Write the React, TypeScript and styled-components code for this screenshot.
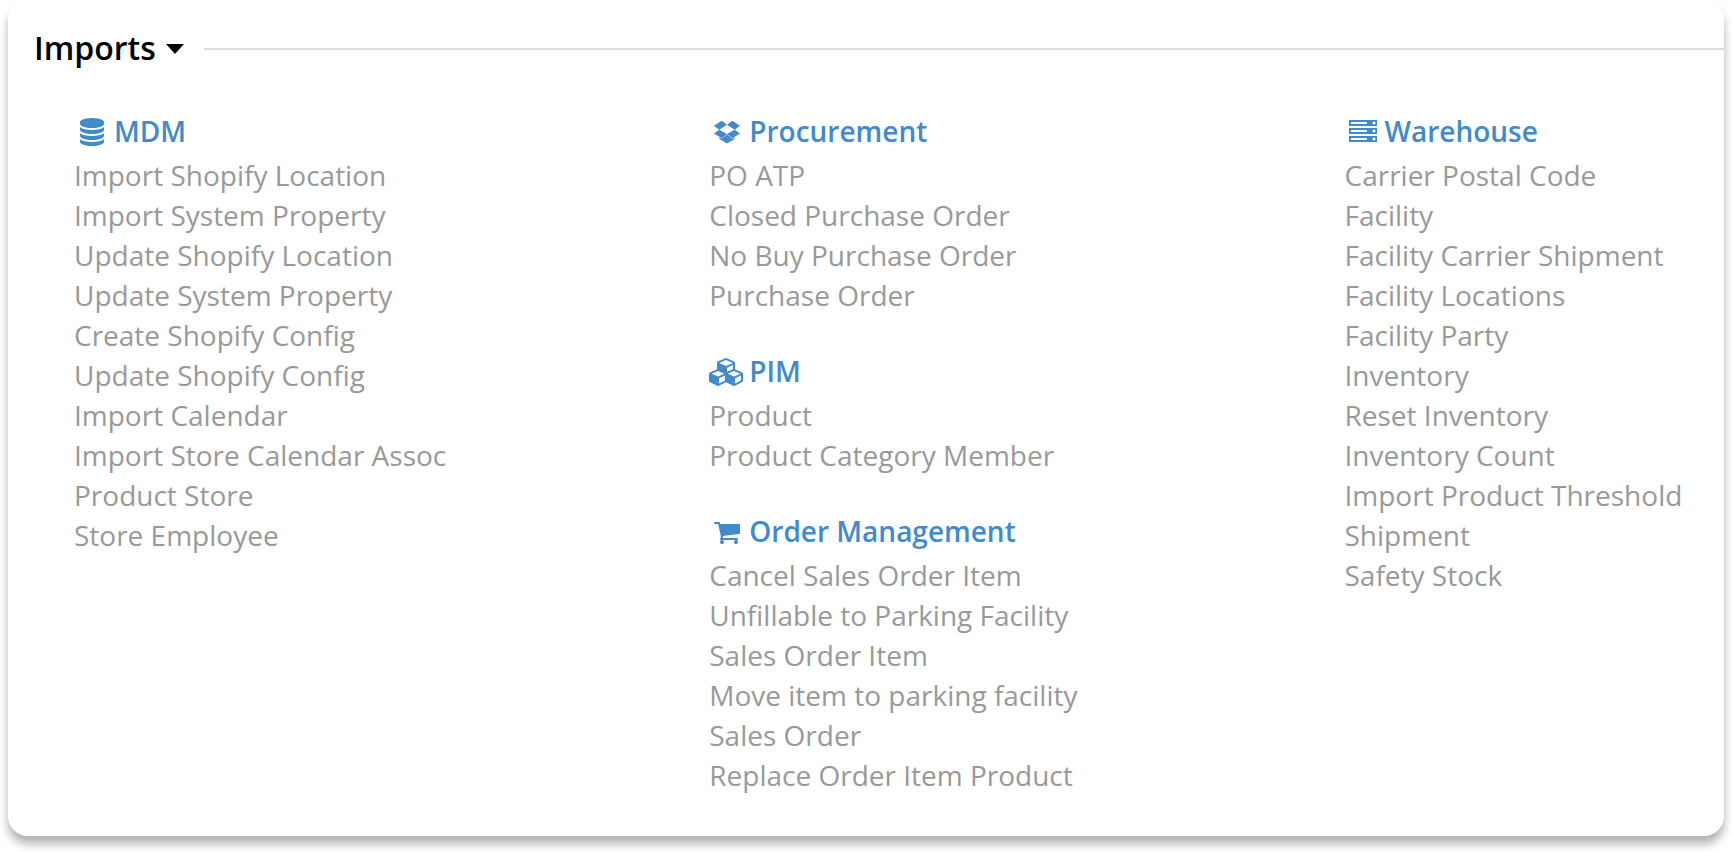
import React from 'react';
import styled, { createGlobalStyle } from 'styled-components';

const Global = createGlobalStyle`
  *, *::before, *::after { box-sizing: border-box; }
  body { margin: 0; background: #fff; font-family: "Open Sans", "Noto Sans", sans-serif; }
`;

const Page = styled.main`
  padding: 0 8px 16px;
  overflow: hidden;
`;

const Card = styled.section`
  border-radius: 20px;
  background: #fff;
  box-shadow: 0 8px 10px rgba(0, 0, 0, 0.3);
  padding: 24px 0 41px 26px;
`;

const Header = styled.header`
  display: flex;
  align-items: center;
  gap: 20px;
  height: 50px;
  &::after { content: ""; flex: 1; height: 2px; background: #ddd; }
`;

const Toggle = styled.button`
  display: flex;
  align-items: center;
  gap: 10px;
  padding: 0 0 2px;
  border: 0;
  background: none;
  color: #000;
  font: 600 32px/46px "Open Sans", sans-serif;
`;

const Caret = styled.svg`
  width: 18px;
  height: 10px;
  margin-top: 2px;
  fill: currentColor;
`;

const Columns = styled.div`
  display: grid;
  grid-template-columns: 77fr 77fr 46fr;
  padding: 33px 0 0 40px;
`;

const Column = styled.div`
  display: flex;
  flex-direction: column;
  gap: 32px;
`;

const GroupTitle = styled.h2`
  display: flex;
  align-items: center;
  gap: 4px;
  margin: 0;
  color: #428bca;
  font: 600 28px/48px "Open Sans", sans-serif;
`;

const Icon = styled.svg`
  width: 36px;
  height: 28px;
  margin-top: 2px;
  fill: currentColor;
`;

const List = styled.ul`
  margin: 0;
  padding: 0;
  list-style: none;
`;

const Item = styled.li`
  font-size: 28px;
  line-height: 40px;
  white-space: nowrap;
`;

const Link = styled.a`
  color: #999;
  text-decoration: none;
`;

type IconShape = { width: number; path: string };

const database: IconShape = {
  width: 1536,
  path: 'M768 768q237 0 443-43t325-127v170q0 69-103 128t-280 93.5-385 34.5-385-34.5-280-93.5-103-128v-170q119 84 325 127t443 43zm0 768q237 0 443-43t325-127v170q0 69-103 128t-280 93.5-385 34.5-385-34.5-280-93.5-103-128v-170q119 84 325 127t443 43zm0-384q237 0 443-43t325-127v170q0 69-103 128t-280 93.5-385 34.5-385-34.5-280-93.5-103-128v-170q119 84 325 127t443 43zm0-1152q208 0 385 34.5t280 93.5 103 128v128q0 69-103 128t-280 93.5-385 34.5-385-34.5-280-93.5-103-128v-128q0-69 103-128t280-93.5 385-34.5z',
};

const dropbox: IconShape = {
  width: 1792,
  path: 'M554 170L896 434L402 747L64 497zM1238 170L896 434L1390 747L1728 497zM402 747L896 1030L554 1290L64 995zM1390 747L896 1030L1238 1290L1728 995zM407 1240V1350L896 1630L1385 1350V1240L1238 1330L896 1060L554 1330z',
};

const cubes: IconShape = {
  width: 2304,
  path: 'M640 1632l384-192v-314l-384 164v342zm-64-454l404-173-404-173-404 173zm1088 454l384-192v-314l-384 164v342zm-64-454l404-173-404-173-404 173zm-448-293l384-165v-266l-384 164v267zm-64-379l441-189-441-189-441 189zm1088 518v416q0 36-19 67t-52 47l-448 224q-25 14-57 14t-57-14l-448-224q-4-2-7-4-2 2-7 4l-448 224q-25 14-57 14t-57-14l-448-224q-33-16-52-47t-19-67v-416q0-38 21.5-70t56.5-48l434-186v-400q0-38 21.5-70t56.5-48l448-192q23-10 50-10t50 10l448 192q35 16 56.5 48t21.5 70v400l434 186q36 16 57 48t21 70z',
};

const cart: IconShape = {
  width: 1792,
  path: 'M704 1536q0 52-38 90t-90 38-90-38-38-90 38-90 90-38 90 38 38 90zm896 0q0 52-38 90t-90 38-90-38-38-90 38-90 90-38 90 38 38 90zm128-1088v512q0 24-16.5 42.5t-40.5 21.5l-1044 122q13 60 13 70 0 16-24 64h920q26 0 45 19t19 45-19 45-45 19h-1024q-26 0-45-19t-19-45q0-11 8-31.5t16-36 21.5-40 15.5-29.5l-177-823h-204q-26 0-45-19t-19-45 19-45 45-19h256q16 0 28.5 6.5t19.5 15.5 13 24.5 8 26 5.5 29.5 4.5 26h1201q26 0 45 19t19 45z',
};

const server: IconShape = {
  width: 1792,
  path: 'M128 1408h1024v-128h-1024v128zm0-512h1024v-128h-1024v128zm1568 448q0-40-28-68t-68-28-68 28-28 68 28 68 68 28 68-28 28-68zm-1568-960h1024v-128h-1024v128zm1568 448q0-40-28-68t-68-28-68 28-28 68 28 68 68 28 68-28 28-68zm0-512q0-40-28-68t-68-28-68 28-28 68 28 68 68 28 68-28 28-68zm96 832v384h-1792v-384h1792zm0-512v384h-1792v-384h1792zm0-512v384h-1792v-384h1792z',
};

type GroupData = { icon: IconShape; title: string; items: string[] };

const columns: GroupData[][] = [
  [
    {
      icon: database,
      title: 'MDM',
      items: ['Import Shopify Location', 'Import System Property', 'Update Shopify Location', 'Update System Property', 'Create Shopify Config', 'Update Shopify Config', 'Import Calendar', 'Import Store Calendar Assoc', 'Product Store', 'Store Employee'],
    },
  ],
  [
    {
      icon: dropbox,
      title: 'Procurement',
      items: ['PO ATP', 'Closed Purchase Order', 'No Buy Purchase Order', 'Purchase Order'],
    },
    { icon: cubes, title: 'PIM', items: ['Product', 'Product Category Member'] },
    {
      icon: cart,
      title: 'Order Management',
      items: ['Cancel Sales Order Item', 'Unfillable to Parking Facility', 'Sales Order Item', 'Move item to parking facility', 'Sales Order', 'Replace Order Item Product'],
    },
  ],
  [
    {
      icon: server,
      title: 'Warehouse',
      items: ['Carrier Postal Code', 'Facility', 'Facility Carrier Shipment', 'Facility Locations', 'Facility Party', 'Inventory', 'Reset Inventory', 'Inventory Count', 'Import Product Threshold', 'Shipment', 'Safety Stock'],
    },
  ],
];

const Group = ({ icon, title, items }: GroupData) => (
  <section>
    <GroupTitle>
      <Icon viewBox={`0 0 ${icon.width} 1792`} aria-hidden="true">
        <path d={icon.path} />
      </Icon>
      {title}
    </GroupTitle>
    <List>
      {items.map((item) => (
        <Item key={item}><Link href="#">{item}</Link></Item>
      ))}
    </List>
  </section>
);

export default function App() {
  return (
    <Page>
      <Global />
      <Card>
        <Header>
          <Toggle type="button" aria-expanded="true">
            Imports
            <Caret viewBox="0 0 18 10" aria-hidden="true"><path d="M0 0h18l-9 10z" /></Caret>
          </Toggle>
        </Header>
        <Columns>
          {columns.map((groups) => (
            <Column key={groups[0].title}>
              {groups.map((group) => <Group key={group.title} {...group} />)}
            </Column>
          ))}
        </Columns>
      </Card>
    </Page>
  );
}
